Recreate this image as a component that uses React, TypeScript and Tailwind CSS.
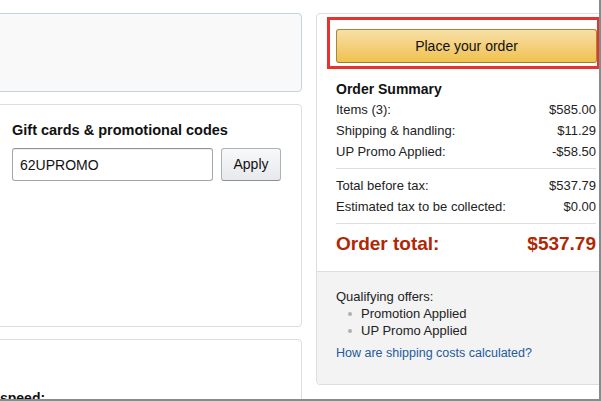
import React from "react";

const Row = ({ label, value }: { label: string; value: string }) => (
  <div className="flex justify-between h-[21px] items-center text-[13px] text-[#222]">
    <span>{label}</span>
    <span>{value}</span>
  </div>
);

const App = () => {
  return (
    <div
      className="w-[601px] h-[401px] overflow-hidden bg-white border-r-[2px] border-b-[2px] border-[#8a8a8a]"
      style={{ fontFamily: '"Liberation Sans", Arial, sans-serif' }}
    >
      <div className="flex gap-[14px] ml-[-20px] pt-[13px] w-[660px]">
        {/* left column */}
        <div className="w-[322px] shrink-0 flex flex-col gap-[12px]">
          <div className="h-[79px] rounded-[4px] border border-[#c5d3de] bg-[#f9f9fa]"></div>
          <div className="h-[223px] rounded-[4px] border border-[#dddddd] bg-white pl-[31px] pt-[17px]">
            <h3 className="text-[14.5px] leading-[17px] font-bold text-[#111]">
              Gift cards &amp; promotional codes
            </h3>
            <div className="flex gap-[8px] mt-[9px]">
              <input
                className="w-[201px] h-[33px] rounded-[3px] border border-[#a6a6a6] border-t-[#949494] px-[7px] text-[14px] text-[#111] outline-none shadow-[inset_0_1px_0_rgba(0,0,0,0.07)]"
                defaultValue="62UPROMO"
              />
              <button
                type="button"
                className="w-[60px] h-[33px] rounded-[3px] border border-[#adb1b8] border-b-[#8d9096] bg-gradient-to-b from-[#f7f8fa] to-[#e7e9ec] text-[14px] text-[#111]"
              >
                Apply
              </button>
            </div>
          </div>
          <div className="h-[120px] rounded-[4px] border border-[#dddddd] bg-white pt-[50px] pl-[19px]">
            <p className="text-[14px] leading-[17px] font-bold text-[#111]">speed:</p>
          </div>
        </div>

        {/* right column */}
        <div className="w-[300px] shrink-0 h-[372px] rounded-[4px] border border-[#dddddd] bg-white overflow-hidden flex flex-col">
          <div className="px-[19px]">
            <div className="w-[273px] ml-[-9px] mt-[3px] border-[3px] border-[#e8322f] pl-[6px] pt-[9px] pb-[3px]">
              <button
                type="button"
                className="w-[261px] h-[34px] rounded-[3px] border border-[#a88734] border-b-[#9c7e31] bg-gradient-to-b from-[#f7dfa5] to-[#f0c14b] text-[14px] text-[#111]"
              >
                Place your order
              </button>
            </div>
            <h3 className="mt-[11px] text-[14px] leading-[18px] font-bold text-[#111] mb-[1px]">
              Order Summary
            </h3>
            <Row label="Items (3):" value="$585.00" />
            <Row label="Shipping & handling:" value="$11.29" />
            <Row label="UP Promo Applied:" value="-$58.50" />
            <div className="border-t border-[#dddddd] mt-[6px] mb-[6px]"></div>
            <Row label="Total before tax:" value="$537.79" />
            <Row label="Estimated tax to be collected:" value="$0.00" />
            <div className="border-t border-[#dddddd] mt-[6px] mb-[6px]"></div>
            <div className="flex justify-between items-center h-[28px] text-[19px] font-bold text-[#b12704]">
              <span>Order total:</span>
              <span>$537.79</span>
            </div>
            <div className="h-[13px]"></div>
          </div>
          <div className="flex-1 border-t border-[#dddddd] bg-[#f3f3f3] px-[19px] pt-[16px] text-[13px] text-[#222]">
            <p className="leading-[17px]">Qualifying offers:</p>
            <ul>
              <li className="flex items-center leading-[17px]">
                <span className="w-[4px] h-[4px] rounded-full bg-[#b0b0b0] ml-[12px] mr-[9px]"></span>
                Promotion Applied
              </li>
              <li className="flex items-center leading-[17px]">
                <span className="w-[4px] h-[4px] rounded-full bg-[#b0b0b0] ml-[12px] mr-[9px]"></span>
                UP Promo Applied
              </li>
            </ul>
            <a className="block mt-[6px] leading-[17px] text-[12.5px] text-[#245a9e]" href="#">
              How are shipping costs calculated?
            </a>
          </div>
        </div>
      </div>
    </div>
  );
};

export default App;
